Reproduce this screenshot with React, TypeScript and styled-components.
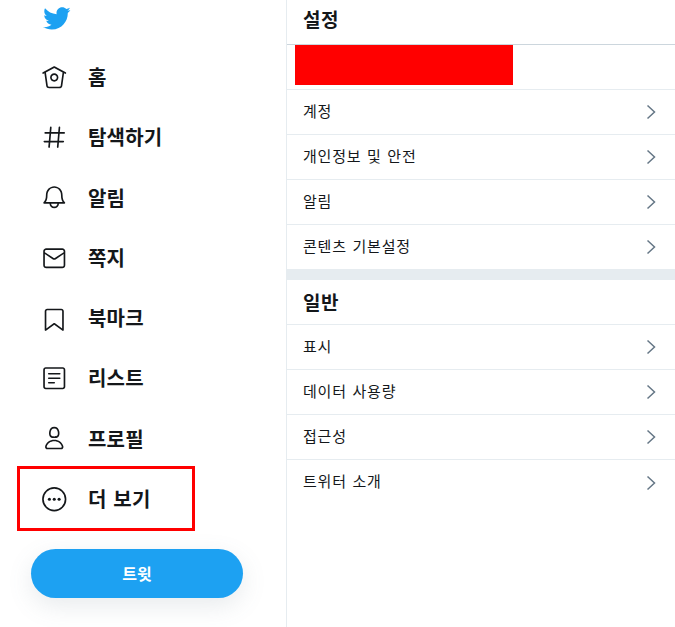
import React from "react";
import styled, { createGlobalStyle } from "styled-components";

const GlobalStyle = createGlobalStyle`
    html, body {
        margin: 0;
        padding: 0;
        background: #fff;
        overflow: hidden;
    }
    body {
        font-family: "Noto Sans CJK KR", "Noto Sans", sans-serif;
    }
`;

const Page = styled.div`
    display: flex;
    width: 675px;
    height: 627px;
    overflow: hidden;
`;

/* Sidebar */
const Sidebar = styled.aside`
    box-sizing: border-box;
    width: 287px;
    flex: none;
    border-right: 1px solid #e6ecf0;
    padding-top: 4px;
`;

const Logo = styled.svg`
    display: block;
    width: 29px;
    height: 29px;
    margin: 0 0 14px 41.5px;
    fill: #1da1f2;
`;

const NavList = styled.nav`
    display: flex;
    flex-direction: column;
`;

const NavItem = styled.a<{ $marked?: boolean }>`
    position: relative;
    display: flex;
    align-items: center;
    gap: 20.5px;
    height: 60.25px;
    padding-left: 41px;
    color: #14171a;
    font-size: 20px;
    font-weight: 700;
    line-height: 1;
    letter-spacing: 0.2px;
    word-spacing: 2px;

    ${({ $marked }) =>
        $marked &&
        `
        &::after {
            content: "";
            position: absolute;
            left: 17px;
            top: -3px;
            width: 178px;
            height: 65px;
            box-sizing: border-box;
            border: 3px solid #ff0000;
        }
    `}
`;

const NavIcon = styled.svg`
    width: 26.5px;
    height: 26.5px;
    flex: none;
    fill: #14171a;
`;

const TweetButton = styled.button`
    display: block;
    width: 212px;
    height: 49px;
    margin: 20px 0 0 31px;
    padding: 0 0 2px;
    border: 0;
    border-radius: 25px;
    background: #1da1f2;
    color: #fff;
    font: 700 16px "Noto Sans CJK KR", sans-serif;
    box-shadow: 0 8px 24px rgba(101, 119, 134, 0.15);
`;

/* Settings panel */
const Panel = styled.main`
    flex: 1;
    min-width: 0;
`;

const SectionTitle = styled.h2<{ $strong?: boolean }>`
    box-sizing: border-box;
    display: flex;
    align-items: center;
    height: 45px;
    margin: 0;
    padding: 0 16px ${({ $strong }) => ($strong ? "8px" : "1px")};
    border-bottom: 1px solid ${({ $strong }) => ($strong ? "#ccd6dd" : "#e6ecf0")};
    color: #14171a;
    font-size: 19px;
    font-weight: 700;
    line-height: 1;
    letter-spacing: 0.5px;
`;

const AccountRow = styled.div`
    box-sizing: border-box;
    height: 45px;
    padding-left: 8px;
    border-bottom: 1px solid #e6ecf0;
`;

const RedactedName = styled.div`
    width: 218px;
    height: 40px;
    background: #ff0000;
`;

const SettingRow = styled.a<{ $last?: boolean }>`
    box-sizing: border-box;
    display: flex;
    align-items: center;
    justify-content: space-between;
    height: 45px;
    padding: 0 19px 4px 16px;
    border-bottom: ${({ $last }) => ($last ? "0" : "1px solid #e6ecf0")};
    color: #14171a;
    font-size: 15px;
    line-height: 1;
    letter-spacing: 0.8px;
    word-spacing: 1.5px;
`;

const Chevron = styled.svg`
    width: 10px;
    height: 16px;
    margin-top: 4px;
    flex: none;
    fill: none;
    stroke: #657786;
    stroke-width: 1.5;
`;

const SectionGap = styled.div`
    height: 10px;
    background: #e6ecf0;
`;

const BIRD =
    "M23.643 4.937c-.835.37-1.732.62-2.675.733.962-.576 1.7-1.49 2.048-2.578-.9.534-1.897.922-2.958 1.13-.85-.904-2.06-1.47-3.4-1.47-2.572 0-4.658 2.086-4.658 4.66 0 .364.042.718.12 1.06-3.873-.195-7.304-2.05-9.602-4.868-.4.69-.63 1.49-.63 2.342 0 1.616.823 3.043 2.072 3.878-.764-.025-1.482-.234-2.11-.583v.06c0 2.257 1.605 4.14 3.737 4.568-.392.106-.803.162-1.227.162-.3 0-.593-.028-.877-.082.593 1.85 2.313 3.198 4.352 3.234-1.595 1.25-3.604 1.995-5.786 1.995-.376 0-.747-.022-1.112-.065 2.062 1.323 4.51 2.093 7.14 2.093 8.57 0 13.255-7.098 13.255-13.254 0-.2-.005-.402-.014-.602.91-.658 1.7-1.477 2.323-2.41z";

const navItems = [
    {
        label: "홈",
        icon: (
            <>
                <path d="M22.46 7.57L12.357 2.115c-.223-.12-.49-.12-.713 0L1.543 7.57c-.364.197-.5.652-.303 1.017.135.25.394.393.66.393.12 0 .243-.03.356-.09l.815-.44L4.7 19.963c.214 1.215 1.308 2.062 2.658 2.062h9.282c1.352 0 2.445-.848 2.663-2.087l1.626-11.49.818.442c.364.193.82.06 1.017-.304.196-.363.06-.818-.304-1.016zm-4.638 12.133c-.107.606-.703.822-1.18.822H7.36c-.48 0-1.075-.216-1.178-.798L4.48 7.69 12 3.628l7.522 4.06-1.7 12.015z" />
                <path d="M8.22 12.184c0 2.084 1.695 3.78 3.78 3.78s3.78-1.696 3.78-3.78-1.695-3.78-3.78-3.78-3.78 1.696-3.78 3.78zm6.06 0c0 1.258-1.022 2.28-2.28 2.28s-2.28-1.022-2.28-2.28 1.022-2.28 2.28-2.28 2.28 1.022 2.28 2.28z" />
            </>
        ),
    },
    {
        label: "탐색하기",
        icon: (
            <path d="M21 7.337h-3.93l.372-4.272c.036-.412-.27-.775-.682-.812-.417-.03-.776.27-.812.683l-.383 4.4h-6.32l.37-4.27c.037-.413-.27-.776-.68-.813-.42-.03-.777.27-.813.683l-.382 4.4H3.782c-.414 0-.75.337-.75.75s.336.75.75.75H7.61l-.55 6.327H3c-.414 0-.75.336-.75.75s.336.75.75.75h3.93l-.372 4.272c-.036.412.27.775.682.812l.066.003c.385 0 .712-.295.746-.686l.383-4.4h6.32l-.37 4.27c-.036.413.27.776.682.813l.066.003c.385 0 .712-.295.746-.686l.382-4.4h3.957c.413 0 .75-.337.75-.75s-.337-.75-.75-.75H16.39l.55-6.327H21c.414 0 .75-.336.75-.75s-.336-.75-.75-.75zm-6.115 7.826h-6.32l.55-6.326h6.32l-.55 6.326z" />
        ),
    },
    {
        label: "알림",
        icon: (
            <path d="M21.697 16.468c-.02-.016-2.14-1.64-2.103-6.03.02-2.532-.812-4.782-2.347-6.335C15.872 2.71 14.01 1.94 12.005 1.93h-.013c-2.004.01-3.866.78-5.242 2.174-1.534 1.553-2.368 3.802-2.346 6.334.037 4.33-2.02 5.967-2.102 6.03-.26.193-.366.53-.265.838.102.308.39.515.712.515h4.92c.102 2.31 1.997 4.16 4.33 4.16s4.226-1.85 4.327-4.16h4.922c.322 0 .61-.206.71-.514.103-.307-.003-.645-.263-.838zM12 20.478c-1.505 0-2.73-1.177-2.828-2.658h5.656c-.1 1.48-1.323 2.66-2.828 2.66zM4.38 16.32c.74-1.132 1.548-3.028 1.524-5.896-.018-2.16.644-3.982 1.913-5.267C8.91 4.05 10.397 3.437 12 3.43c1.603.008 3.087.62 4.18 1.728 1.27 1.285 1.933 3.106 1.915 5.267-.024 2.868.785 4.765 1.525 5.896H4.38z" />
        ),
    },
    {
        label: "쪽지",
        icon: (
            <path d="M19.25 3.018H4.75C3.233 3.018 2 4.252 2 5.77v12.495c0 1.518 1.233 2.753 2.75 2.753h14.5c1.517 0 2.75-1.235 2.75-2.753V5.77c0-1.518-1.233-2.752-2.75-2.752zm-14.5 1.5h14.5c.69 0 1.25.56 1.25 1.25v.714l-8.05 5.367c-.273.18-.626.182-.9-.002L3.5 6.482v-.714c0-.69.56-1.25 1.25-1.25zm14.5 14.998H4.75c-.69 0-1.25-.56-1.25-1.25V8.24l7.24 4.83c.383.256.822.384 1.26.384.44 0 .877-.128 1.26-.383l7.24-4.83v10.022c0 .69-.56 1.25-1.25 1.25z" />
        ),
    },
    {
        label: "북마크",
        icon: (
            <path d="M19.9 23.5c-.157 0-.312-.05-.442-.144L12 17.928l-7.458 5.43c-.228.164-.53.19-.782.06-.25-.127-.41-.385-.41-.667V5.6c0-1.24 1.01-2.25 2.25-2.25h12.798c1.24 0 2.25 1.01 2.25 2.25v17.15c0 .282-.158.54-.41.668-.106.055-.223.082-.34.082zM12 16.25c.155 0 .31.048.44.144l6.71 4.883V5.6c0-.412-.337-.75-.75-.75H5.6c-.413 0-.75.338-.75.75v15.677l6.71-4.883c.13-.096.285-.144.44-.144z" />
        ),
    },
    {
        label: "리스트",
        icon: (
            <>
                <path d="M19.75 22H4.25C3.01 22 2 20.99 2 19.75V4.25C2 3.01 3.01 2 4.25 2h15.5C20.99 2 22 3.01 22 4.25v15.5c0 1.24-1.01 2.25-2.25 2.25zM4.25 3.5c-.414 0-.75.337-.75.75v15.5c0 .413.336.75.75.75h15.5c.414 0 .75-.337.75-.75V4.25c0-.413-.336-.75-.75-.75H4.25z" />
                <path d="M17 8.64H7c-.414 0-.75-.337-.75-.75s.336-.75.75-.75h10c.414 0 .75.335.75.75s-.336.75-.75.75zm0 4.11H7c-.414 0-.75-.336-.75-.75s.336-.75.75-.75h10c.414 0 .75.336.75.75s-.336.75-.75.75zm-5 4.11H7c-.414 0-.75-.335-.75-.75s.336-.75.75-.75h5c.414 0 .75.337.75.75s-.336.75-.75.75z" />
            </>
        ),
    },
    {
        label: "프로필",
        icon: (
            <path d="M12 11.816c1.355 0 2.872-.15 3.84-1.256.814-.93 1.078-2.368.806-4.392-.38-2.825-2.117-4.512-4.646-4.512S7.734 3.343 7.354 6.17c-.272 2.022-.008 3.46.806 4.39.968 1.107 2.485 1.256 3.84 1.256zM8.84 6.368c.162-1.2.787-3.212 3.16-3.212s2.998 2.013 3.16 3.212c.207 1.55.057 2.627-.45 3.205-.455.52-1.266.743-2.71.743s-2.255-.223-2.71-.743c-.507-.578-.657-1.656-.45-3.205zm11.44 12.868c-.877-3.526-4.282-5.99-8.28-5.99s-7.403 2.464-8.28 5.99c-.172.692-.028 1.4.395 1.94.408.52 1.04.82 1.733.82h12.304c.693 0 1.325-.3 1.733-.82.424-.54.567-1.247.394-1.94zm-1.576 1.016c-.126.16-.316.246-.552.246H5.848c-.235 0-.426-.085-.552-.246-.137-.174-.18-.412-.12-.654.71-2.855 3.517-4.85 6.824-4.85s6.114 1.994 6.824 4.85c.06.242.017.48-.12.654z" />
        ),
    },
    {
        label: "더 보기",
        marked: true,
        icon: (
            <>
                <circle cx="12" cy="12" r="10.25" fill="none" stroke="#14171a" strokeWidth="1.5" />
                <circle cx="7.6" cy="12" r="1.4" />
                <circle cx="12" cy="12" r="1.4" />
                <circle cx="16.4" cy="12" r="1.4" />
            </>
        ),
    },
];

const accountRows = ["계정", "개인정보 및 안전", "알림", "콘텐츠 기본설정"];
const generalRows = ["표시", "데이터 사용량", "접근성", "트위터 소개"];

function Setting({ label, last }: { label: string; last?: boolean }) {
    return (
        <SettingRow $last={last}>
            {label}
            <Chevron viewBox="0 0 10 16">
                <polyline points="1.5,1.5 8.5,8 1.5,14.5" />
            </Chevron>
        </SettingRow>
    );
}

export default function App() {
    return (
        <Page>
            <GlobalStyle />
            <Sidebar>
                <Logo viewBox="0 0 24 24">
                    <path d={BIRD} />
                </Logo>
                <NavList>
                    {navItems.map((item) => (
                        <NavItem key={item.label} $marked={item.marked}>
                            <NavIcon viewBox="0 0 24 24">{item.icon}</NavIcon>
                            {item.label}
                        </NavItem>
                    ))}
                </NavList>
                <TweetButton>트윗</TweetButton>
            </Sidebar>
            <Panel>
                <SectionTitle $strong>설정</SectionTitle>
                <AccountRow>
                    <RedactedName />
                </AccountRow>
                {accountRows.map((label) => (
                    <Setting key={label} label={label} />
                ))}
                <SectionGap />
                <SectionTitle>일반</SectionTitle>
                {generalRows.map((label, i) => (
                    <Setting key={label} label={label} last={i === generalRows.length - 1} />
                ))}
            </Panel>
        </Page>
    );
}
